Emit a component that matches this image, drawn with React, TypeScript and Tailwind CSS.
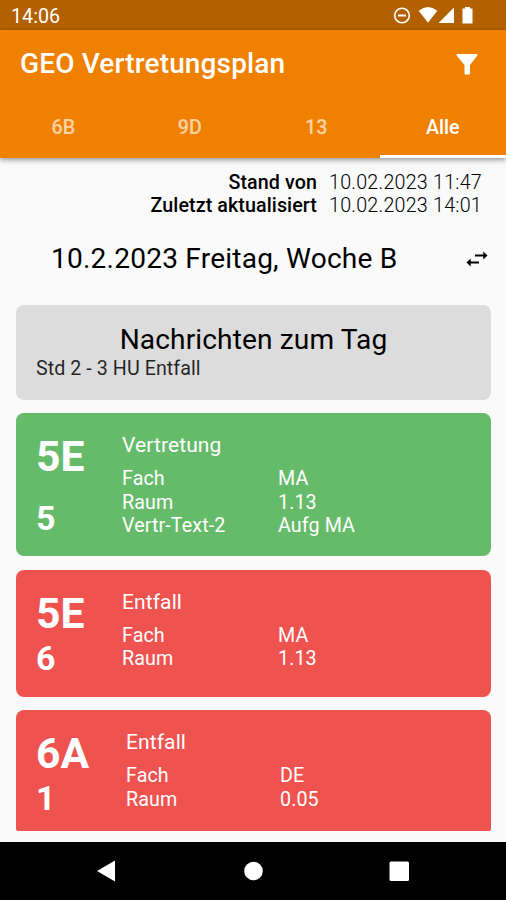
import { useState } from 'react'
import clsx from 'clsx'

interface Eintrag {
  klasse: string
  stunde: string
  art: string
  farbe: string
  spalten: string
  details: [string, string][]
}

const TABS = ['6B', '9D', '13', 'Alle']

const EINTRAEGE: Eintrag[] = [
  {
    klasse: '5E',
    stunde: '5',
    art: 'Vertretung',
    farbe: 'bg-[#66bb6a] h-[143px] rounded-lg',
    spalten: 'grid-cols-[86px_156px_1fr]',
    details: [['Fach', 'MA'], ['Raum', '1.13'], ['Vertr-Text-2', 'Aufg MA']],
  },
  {
    klasse: '5E',
    stunde: '6',
    art: 'Entfall',
    farbe: 'bg-[#ef5350] h-[127px] rounded-lg',
    spalten: 'grid-cols-[86px_156px_1fr]',
    details: [['Fach', 'MA'], ['Raum', '1.13']],
  },
  {
    klasse: '6A',
    stunde: '1',
    art: 'Entfall',
    farbe: 'bg-[#ef5350] h-[121px] rounded-t-lg rounded-b-[2px]',
    spalten: 'grid-cols-[90px_154px_1fr]',
    details: [['Fach', 'DE'], ['Raum', '0.05']],
  },
]

function StatusBar() {
  return (
    <div className="h-[30px] bg-[#b36000] flex items-center justify-between pl-[11px] pr-[32px] text-white">
      <span className="text-[19.7px] leading-[30px] mt-[3px]">14:06</span>
      <svg width="82" height="20" viewBox="392 5 82 20" fill="currentColor">
        <circle cx="402" cy="15.5" r="7.3" fill="none" stroke="currentColor" strokeWidth="1.6" />
        <path d="M398 14.5h8v2h-8z" />
        <path d="M418.700 10.700Q428 3.500 437.300 10.700L428 22.700Z" />
        <path d="M438.500 23L454 7.500V23Z" />
        <path d="M462.500 8.500h2.500V7h5v1.500h2.500V23.500h-10z" />
      </svg>
    </div>
  )
}

function Karte({ e }: { e: Eintrag }) {
  return (
    <div className={clsx('grid content-start pl-5 pt-5 text-white', e.farbe, e.spalten)}>
      <div className="flex flex-col justify-between gap-[6px] pt-px pb-[3px] font-bold">
        <span className="text-[42.7px] leading-[44px]">{e.klasse}</span>
        <span className="text-[34px] leading-[34px]">{e.stunde}</span>
      </div>
      <div className="col-span-2 grid grid-cols-subgrid content-start text-[19.7px] leading-[23.4px] tracking-[0.1px]">
        <p className="col-span-2 text-[21px] leading-6 mb-[10px]">{e.art}</p>
        {e.details.map(([name, wert]) => (
          <div key={name} className="col-span-2 grid grid-cols-subgrid">
            <span>{name}</span>
            <span>{wert}</span>
          </div>
        ))}
      </div>
    </div>
  )
}

export default function App() {
  const [tab, setTab] = useState('Alle')

  return (
    <div className="w-[506px] h-[900px] flex flex-col overflow-hidden bg-[#fafafa] text-black font-[Roboto,sans-serif]">
      <StatusBar />

      {/* App-Leiste mit Tabs */}
      <header className="h-[128px] bg-[#ef8000] text-white shadow-[0_2px_5px_rgba(0,0,0,0.4)]">
        <div className="h-[68px] flex items-center justify-between pl-5 pr-[28px]">
          <h1 className="text-[28px] font-medium tracking-[0.15px]">GEO Vertretungsplan</h1>
          <svg width="22" height="22" viewBox="0 0 22 22" fill="currentColor">
            <path d="M1.500 1h19c1 0 1.300 1 .7 1.800L14 12v8.500c0 .6-.4 1-1 1H9.500c-.6 0-1-.4-1-1V12L.8 2.800C.2 2 .5 1 1.500 1z" />
          </svg>
        </div>
        <nav className="grid grid-cols-4 h-[60px]">
          {TABS.map(t => (
            <button
              key={t}
              onClick={() => setTab(t)}
              className={clsx(
                'text-[19.7px] font-medium border-b-[3px] pt-[2px]',
                t === tab ? 'border-white' : 'border-transparent text-white/65',
              )}
            >
              {t}
            </button>
          ))}
        </nav>
      </header>

      <dl className="grid grid-cols-[317px_1fr] gap-x-3 mt-[13px] text-[19.7px] leading-[23.4px] tracking-[0.22px]">
        <dt className="text-right font-medium tracking-[0.08px]">Stand von</dt>
        <dd className="font-light">10.02.2023 11:47</dd>
        <dt className="text-right font-medium tracking-[0.08px]">Zuletzt aktualisiert</dt>
        <dd className="font-light">10.02.2023 14:01</dd>
      </dl>

      <div className="flex items-center justify-between h-[33px] mt-[24px] pl-[51px] pr-[18px]">
        <h2 className="text-[28.1px] leading-[33px] tracking-[0.2px]">10.2.2023 Freitag, Woche B</h2>
        <svg width="22" height="16" viewBox="0 0 22 16" fill="currentColor" className="mt-[2px]">
          <path d="M21.500 4.500L17.300.5v3H9v2h8.300v3zM.5 11.500l4.200-4v3H13v2H4.700v3z" />
        </svg>
      </div>

      <main className="flex flex-col gap-[13.500px] pr-[15px] pl-4 mt-[30px]">
        <section className="h-[95px] rounded-lg bg-[#dcdcdc] px-5 pt-[18px]">
          <h3 className="text-center text-[28.1px] leading-[34px] tracking-[0.12px]">Nachrichten zum Tag</h3>
          <p className="text-[19.7px] leading-[24px] tracking-[0.05px] text-black/85">Std 2 - 3 HU Entfall</p>
        </section>
        {EINTRAEGE.map(e => (
          <Karte key={e.klasse + e.stunde} e={e} />
        ))}
      </main>

      <footer className="mt-auto h-[58px] shrink-0 bg-black text-white">
        <svg width="506" height="58" viewBox="0 842 506 58" fill="currentColor">
          <path d="M97 871L115 860.500V881.500Z" />
          <circle cx="253.500" cy="871" r="9.300" />
          <rect x="389.500" y="861.500" width="19.500" height="19.500" rx="1.500" />
        </svg>
      </footer>
    </div>
  )
}
